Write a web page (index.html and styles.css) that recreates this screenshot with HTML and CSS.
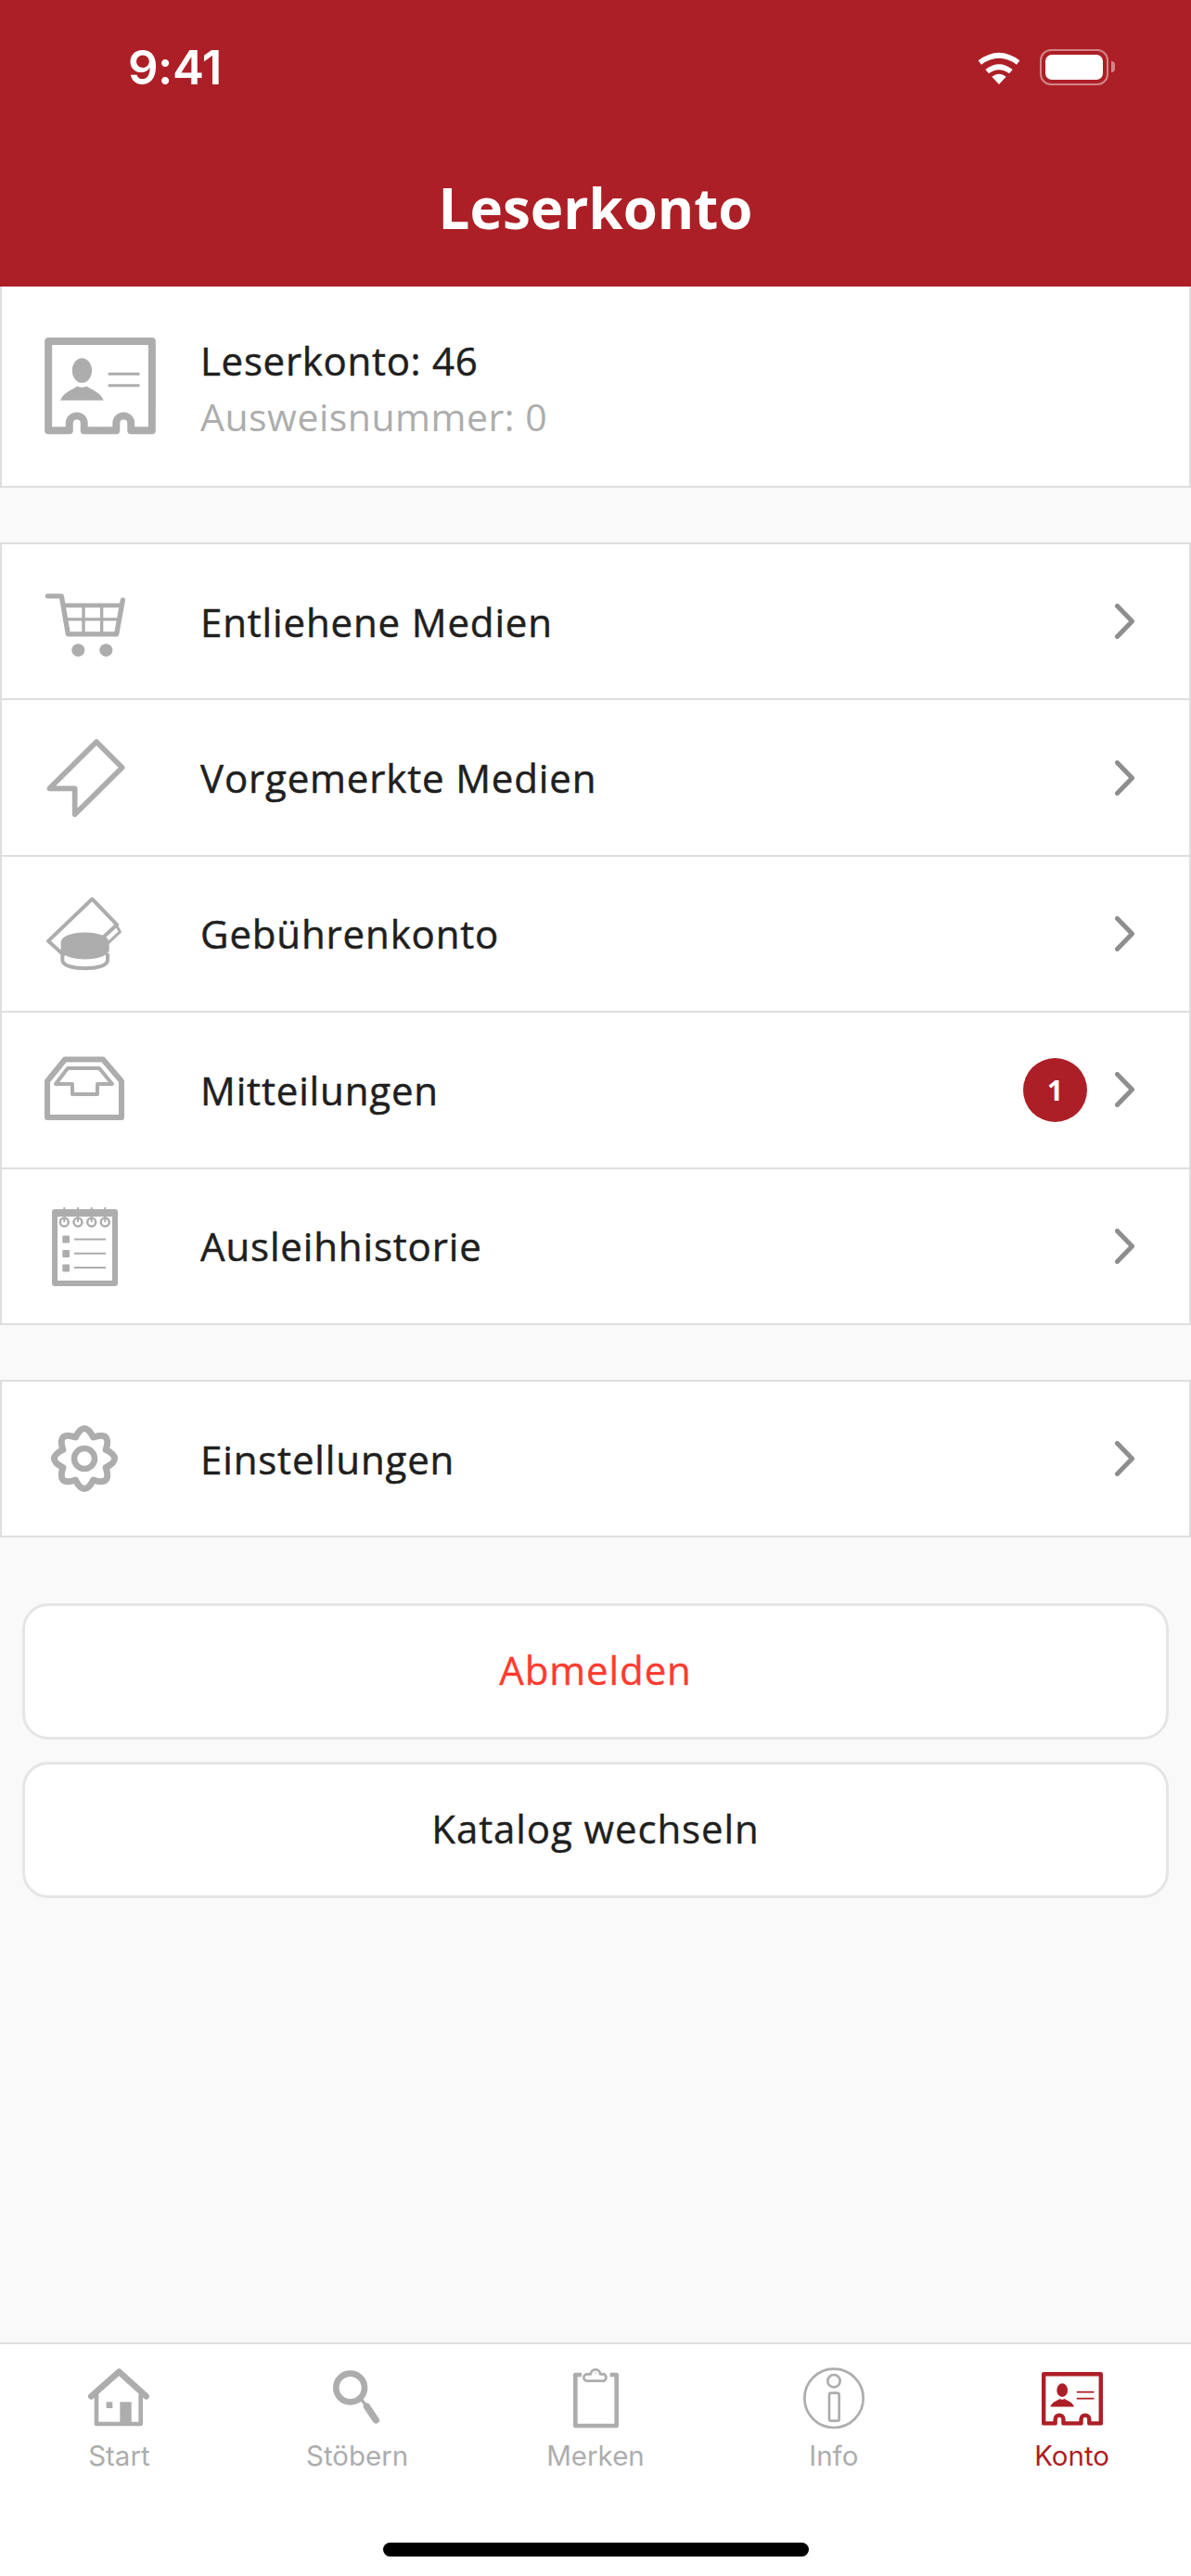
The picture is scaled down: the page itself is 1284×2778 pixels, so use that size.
FILE: index.html
```html
<!DOCTYPE html>
<html lang="de">
<head>
    <meta charset="UTF-8">
    <meta name="viewport" content="width=device-width, initial-scale=1.0">
    <title>Leserkonto</title>
    <link rel="stylesheet" href="styles.css">
</head>
<body>
    <svg class="defs" width="0" height="0">
        <symbol id="card" viewBox="24 28 360 316">
            <path d="M36 40H372V330H304V306A24 24 0 0 0 256 306V330H152V306A24 24 0 0 0 104 306V330H36Z" fill="none" stroke="currentColor" stroke-width="24" stroke-linejoin="round"/>
            <ellipse cx="145" cy="135" rx="32" ry="40" fill="currentColor"/>
            <path d="M75 232C85 205 115 197 130 186Q145 194 160 186C175 197 205 205 215 232Z" fill="currentColor"/>
            <path d="M230 146H332M230 184H332" stroke="currentColor" stroke-width="9"/>
        </symbol>
        <symbol id="chevron" viewBox="0 0 21 38">
            <path d="M2.5 2.5L18.5 19L2.5 35.5" fill="none" stroke="currentColor" stroke-width="5" stroke-linecap="round" stroke-linejoin="round"/>
        </symbol>
    </svg>

    <header class="app-header">
        <div class="status-bar">
            <span class="clock">9:41</span>
            <div class="status-icons">
                <svg class="wifi" viewBox="155 72 150 111">
                    <path d="M163 106Q230 55 297 106L287 119Q230 78 173 119Z M186 135Q230 100 274 135L263 148Q230 124 197 148Z M230 183L207 158Q230 140 253 158Z" fill="#fff"/>
                </svg>
                <div class="battery"><div class="battery-level"></div></div>
                <div class="battery-nub"></div>
            </div>
        </div>
        <h1>Leserkonto</h1>
    </header>

    <main class="content">
        <section class="account-card">
            <svg class="card-icon"><use href="#card"/></svg>
            <div class="account-text">
                <div class="account-name">Leserkonto: 46</div>
                <div class="account-number">Ausweisnummer: 0</div>
            </div>
        </section>

        <ul class="menu">
            <li class="menu-row">
                <svg class="row-icon" viewBox="136 163.5 270 270">
                    <path d="M152 217H197L218 340H375L395 230" fill="none" stroke="#adadad" stroke-width="16" stroke-linecap="round" stroke-linejoin="round"/>
                    <path d="M205 247H390" stroke="#adadad" stroke-width="14"/>
                    <path d="M268 247V340M327 247V340M212 292H383" stroke="#adadad" stroke-width="10"/>
                    <circle cx="251" cy="392" r="21" fill="#adadad"/>
                    <circle cx="341" cy="392" r="21" fill="#adadad"/>
                </svg>
                <span class="row-label">Entliehene Medien</span>
                <svg class="chevron"><use href="#chevron"/></svg>
            </li>
            <li class="menu-row">
                <svg class="row-icon" viewBox="136 669 270 270">
                    <path d="M310 687L393 770L240 922V838H158Z" fill="none" stroke="#adadad" stroke-width="17" stroke-linejoin="round"/>
                </svg>
                <span class="row-label">Vorgemerkte Medien</span>
                <svg class="chevron"><use href="#chevron"/></svg>
            </li>
            <li class="menu-row">
                <svg class="row-icon" viewBox="18 19.5 270 270">
                    <path d="M85 222L36 178L178 42L258 125L215 165" fill="none" stroke="#adadad" stroke-width="12" stroke-linejoin="round" stroke-linecap="round"/>
                    <path d="M252 120L268 148L226 188" fill="none" stroke="#adadad" stroke-width="9" stroke-linejoin="round"/>
                    <path d="M77 182A78 32 0 0 1 233 182V207A78 30 0 0 1 77 207Z" fill="#adadad"/>
                    <path d="M82 218V240C82 258 118 266 155 266C192 266 228 258 228 240V218" fill="none" stroke="#adadad" stroke-width="12"/>
                </svg>
                <span class="row-label">Gebührenkonto</span>
                <svg class="chevron"><use href="#chevron"/></svg>
            </li>
            <li class="menu-row">
                <svg class="row-icon" viewBox="0 0 90 90">
                    <path d="M5 36L24 12.5H65L85 36V75H5Z" fill="none" stroke="#adadad" stroke-width="6" stroke-linejoin="round"/>
                    <path d="M14 39L27 22H61L75 39H59V50H32V39Z" fill="none" stroke="#adadad" stroke-width="4" stroke-linejoin="round"/>
                </svg>
                <span class="row-label">Mitteilungen</span>
                <span class="badge">1</span>
                <svg class="chevron"><use href="#chevron"/></svg>
            </li>
            <li class="menu-row">
                <svg class="row-icon" viewBox="0 0 90 90">
                    <rect x="13" y="8" width="65" height="77" fill="none" stroke="#adadad" stroke-width="6" stroke-linejoin="round"/>
                    <rect x="13" y="8" width="65" height="5" fill="#adadad"/>
                    <path d="M23.3 3V19M38 3V19M52.7 3V19M67.3 3V19" stroke="#adadad" stroke-width="2"/>
                    <g fill="#fff" stroke="#adadad" stroke-width="2.5">
                        <circle cx="23.3" cy="19" r="4.5"/>
                        <circle cx="38" cy="19" r="4.5"/>
                        <circle cx="52.7" cy="19" r="4.5"/>
                        <circle cx="67.3" cy="19" r="4.5"/>
                    </g>
                    <path d="M23.3 14V19M38 14V19M52.7 14V19M67.3 14V19" stroke="#adadad" stroke-width="2"/>
                    <g fill="#adadad">
                        <rect x="21.3" y="33.5" width="7.7" height="8" rx="1"/>
                        <rect x="21.3" y="49" width="7.7" height="8" rx="1"/>
                        <rect x="21.3" y="64.5" width="7.7" height="8" rx="1"/>
                    </g>
                    <path d="M34 37.4H68M34 52.7H68M34 68H68" stroke="#adadad" stroke-width="2"/>
                </svg>
                <span class="row-label">Ausleihhistorie</span>
                <svg class="chevron"><use href="#chevron"/></svg>
            </li>
        </ul>

        <ul class="menu">
            <li class="menu-row">
                <svg class="row-icon" viewBox="0 0 90 90">
                    <path d="M35.43 21.9Q45 3 54.57 21.9Q74.7 15.3 68.1 35.43Q87 45 68.1 54.57Q74.7 74.7 54.57 68.1Q45 87 35.43 68.1Q15.3 74.7 21.9 54.57Q3 45 21.9 35.43Q15.3 15.3 35.43 21.9Z" fill="none" stroke="#adadad" stroke-width="7" stroke-linejoin="round"/>
                    <circle cx="45" cy="45" r="11" fill="none" stroke="#adadad" stroke-width="6.5"/>
                </svg>
                <span class="row-label">Einstellungen</span>
                <svg class="chevron"><use href="#chevron"/></svg>
            </li>
        </ul>

        <div class="actions">
            <button class="action-button logout">Abmelden</button>
            <button class="action-button">Katalog wechseln</button>
        </div>
    </main>

    <nav class="tab-bar">
        <div class="tabs">
            <div class="tab">
                <svg class="tab-icon" viewBox="39 21 210 210">
                    <path d="M55 118L145 38L233 118" fill="none" stroke="#adadad" stroke-width="20" stroke-linecap="round" stroke-linejoin="round"/>
                    <path d="M72 110V207H215V110" fill="none" stroke="#adadad" stroke-width="14" stroke-linejoin="round"/>
                    <rect x="148" y="136" width="37" height="70" fill="#adadad"/>
                    <rect x="104" y="136" width="20" height="20" fill="#adadad"/>
                </svg>
                <span>Start</span>
            </div>
            <div class="tab">
                <svg class="tab-icon" viewBox="809 21 210 210">
                    <circle cx="892" cy="90" r="46" fill="none" stroke="#adadad" stroke-width="20"/>
                    <path d="M928 128L945 150" stroke="#adadad" stroke-width="10"/>
                    <path d="M945 150L975 195" stroke="#adadad" stroke-width="22" stroke-linecap="round"/>
                </svg>
                <span>Stöbern</span>
            </div>
            <div class="tab">
                <svg class="tab-icon" viewBox="20 21 210 210">
                    <path d="M80 48H60V213H193V48H172" fill="none" stroke="#adadad" stroke-width="14" stroke-linejoin="round"/>
                    <path d="M98 68H152A12 12 0 0 0 152 46H140A15 15 0 0 0 110 46H98A11 11 0 0 0 98 68Z" fill="#fff" stroke="#adadad" stroke-width="8" stroke-linejoin="round"/>
                    <circle cx="125" cy="42" r="2.5" fill="#adadad"/>
                </svg>
                <span>Merken</span>
            </div>
            <div class="tab">
                <svg class="tab-icon" viewBox="791 21 210 210">
                    <circle cx="896" cy="124" r="95" fill="none" stroke="#adadad" stroke-width="8"/>
                    <circle cx="896" cy="68" r="20" fill="none" stroke="#adadad" stroke-width="8"/>
                    <rect x="881" y="107" width="32" height="90" rx="6" fill="none" stroke="#adadad" stroke-width="8"/>
                </svg>
                <span>Info</span>
            </div>
            <div class="tab active">
                <svg class="tab-icon-card"><use href="#card"/></svg>
                <span>Konto</span>
            </div>
        </div>
        <div class="home-indicator"></div>
    </nav>
</body>
</html>
```

FILE: styles.css
```css
* {
    box-sizing: border-box;
}

body {
    margin: 0;
    width: 1284px;
    height: 2778px;
    display: flex;
    flex-direction: column;
    background-color: #f9f9f9;
    color: #1f1f1f;
    font-family: 'Open Sans', sans-serif;
    overflow: hidden;
}

.defs {
    display: block;
    height: 0;
}

.app-header {
    height: 309px;
    background-color: #ad1f26;
    color: #fff;
}

.status-bar {
    height: 144px;
    display: flex;
    justify-content: space-between;
    align-items: center;
    padding: 0 82px 0 138px;
}

.clock {
    font-family: Inter, sans-serif;
    font-size: 51px;
    font-weight: 600;
    letter-spacing: -0.5px;
}

.status-icons {
    display: flex;
    align-items: center;
}

.wifi {
    width: 50px;
    height: 37px;
    margin-right: 19px;
}

.battery {
    width: 74px;
    height: 39px;
    padding: 4px;
    border: 2px solid rgba(255, 255, 255, 0.45);
    border-radius: 12px;
}

.battery-level {
    height: 100%;
    background-color: #fff;
    border-radius: 7px;
}

.battery-nub {
    width: 4px;
    height: 12px;
    margin-left: 3px;
    background-color: rgba(255, 255, 255, 0.45);
    border-radius: 0 4px 4px 0;
}

h1 {
    margin: 0;
    padding-top: 42px;
    text-align: center;
    font-size: 60px;
    font-weight: 700;
    line-height: 76px;
}

.content {
    flex: 1;
}

.account-card {
    height: 217px;
    display: flex;
    align-items: center;
    gap: 38px;
    padding-left: 36px;
    background-color: #fff;
    border: 2px solid #dedede;
    border-top: none;
}

.card-icon {
    width: 120px;
    height: 105px;
    margin: 0 10px;
    color: #adadad;
}

.account-text {
    margin-top: 4px;
}

.account-name {
    font-size: 42px;
    font-weight: 500;
    letter-spacing: 0.7px;
    line-height: 60px;
    -webkit-text-stroke: 0.5px currentColor;
}

.account-number {
    font-size: 41px;
    color: #adadad;
    letter-spacing: 0.5px;
    line-height: 60px;
}

.menu {
    list-style: none;
    margin: 59px 0 0;
    padding: 0;
    background-color: #fff;
    border: 2px solid #dedede;
    border-bottom: none;
}

.menu-row {
    height: 168.4px;
    display: flex;
    align-items: center;
    padding: 0 59px 0 44px;
    border-bottom: 2px solid #dedede;
}

.row-icon {
    width: 90px;
    height: 90px;
    margin-right: 80px;
    flex-shrink: 0;
}

.row-label {
    flex: 1;
    font-size: 42px;
    font-weight: 500;
    letter-spacing: 0.85px;
    -webkit-text-stroke: 0.5px currentColor;
}

.badge {
    width: 69px;
    height: 69px;
    margin-right: 30px;
    display: flex;
    align-items: center;
    justify-content: center;
    background-color: #ad1f26;
    border-radius: 50%;
    color: #fff;
    font-size: 30px;
    font-weight: 700;
}

.chevron {
    width: 21px;
    height: 38px;
    color: #8e8e8e;
}

.actions {
    display: flex;
    flex-direction: column;
    gap: 24px;
    margin-top: 71px;
    padding: 0 24px;
}

.action-button {
    height: 147px;
    padding-bottom: 6px;
    background-color: #fff;
    border: 3px solid #e5e5e5;
    border-radius: 28px;
    color: #1f1f1f;
    font-family: 'Open Sans', sans-serif;
    font-size: 42px;
    font-weight: 500;
    letter-spacing: 0.9px;
    -webkit-text-stroke: 0.4px currentColor;
}

.logout {
    color: #ff3b30;
}

.tab-bar {
    height: 252px;
    background-color: #fff;
    border-top: 2px solid #dedede;
}

.tabs {
    display: flex;
    padding-top: 24px;
}

.tab {
    flex: 1;
    display: flex;
    flex-direction: column;
    align-items: center;
    color: #adadad;
    font-family: Inter, sans-serif;
    font-size: 29.5px;
    line-height: 40px;
}

.tab span {
    margin-top: 6px;
}

.tab.active {
    color: #ad1f26;
}

.tab-icon {
    width: 70px;
    height: 70px;
}

.tab-icon-card {
    width: 66px;
    height: 58px;
    margin: 6px 0;
}

.home-indicator {
    width: 459px;
    height: 15px;
    margin: 74px auto 0;
    background-color: #000;
    border-radius: 8px;
}
```
